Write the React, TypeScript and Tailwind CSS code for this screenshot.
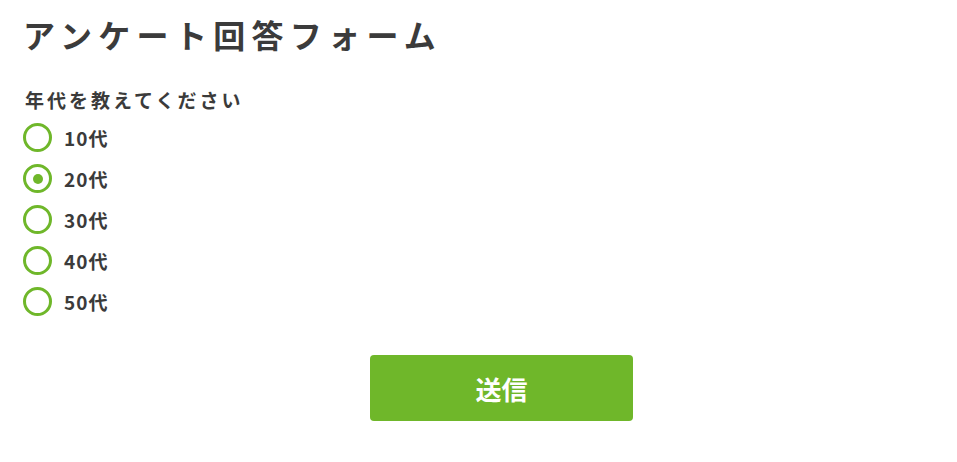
import React, { useState } from "react";

const options = ["10代", "20代", "30代", "40代", "50代"];

export default function App() {
  const [selected, setSelected] = useState("20代");
  return (
    <div
      className="w-[957px] h-[462px] bg-white text-[#3b3b3b] pl-[23px] pt-[10px]"
      style={{ fontFamily: '"Noto Sans CJK JP", "Noto Sans", sans-serif' }}
    >
      <h1 className="text-[32px] font-bold leading-[48px] tracking-[6.3px]">
        アンケート回答フォーム
      </h1>
      <div className="mt-[30px] text-[19px] font-bold leading-[24px] tracking-[3px] ml-[2px]">
        年代を教えてください
      </div>
      <div className="flex flex-col mt-[11px] gap-[12px]">
        {options.map((o) => (
          <label key={o} className="flex items-center gap-[12px] h-[29px] cursor-pointer">
            <span className="w-[29px] h-[29px] rounded-full border-[3.5px] border-[#6fb72a] flex items-center justify-center">
              {selected === o && <span className="w-[10px] h-[10px] rounded-full bg-[#6fb72a]" />}
            </span>
            <input
              type="radio"
              className="hidden"
              checked={selected === o}
              onChange={() => setSelected(o)}
            />
            <span className="text-[19px] font-bold tracking-[1px] leading-[26px]">{o}</span>
          </label>
        ))}
      </div>
      <div className="mt-[39px] ml-[347px]">
        <button className="w-[263px] h-[66px] rounded-[4px] bg-[#6fb72a] text-white text-[26px] font-bold">
          送信
        </button>
      </div>
    </div>
  );
}
